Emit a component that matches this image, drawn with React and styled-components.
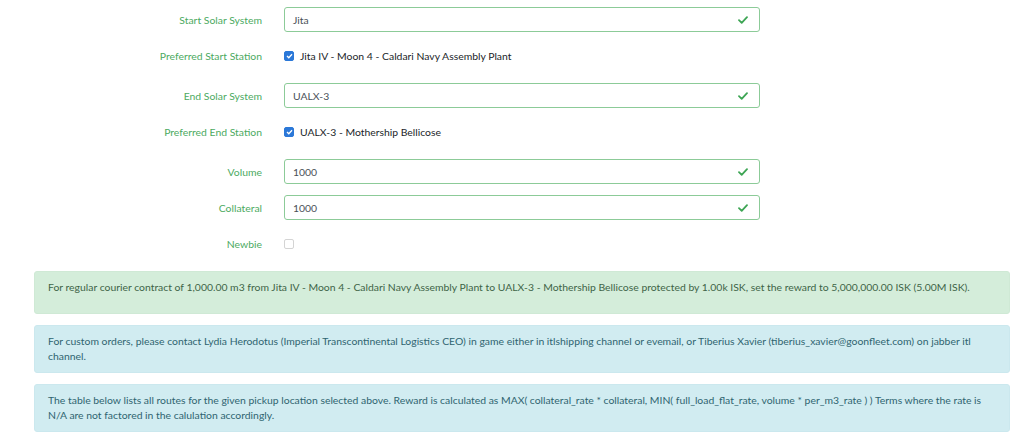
import React from "react";
import styled, { createGlobalStyle } from "styled-components";

const Global = createGlobalStyle`
  html, body { margin: 0; padding: 0; background: #ffffff; }
  body { font-family: Lato, "Liberation Sans", sans-serif; font-size: 10.4px; color: #212529; }
`;

const Page = styled.div`
  padding: 7px 14px 0 34px;
`;

const Form = styled.div`
  display: flex;
  flex-direction: column;
`;

const Row = styled.div`
  display: grid;
  grid-template-columns: 228px 476px;
  column-gap: 22px;
  align-items: center;
  height: 25px;
  margin-bottom: ${(p) => (p.$check ? "15px" : "11px")};
`;

const Label = styled.label`
  text-align: right;
  color: #4caa5f;
  white-space: nowrap;
`;

const InputWrap = styled.div`
  position: relative;
  height: 25px;
  box-sizing: border-box;
  border: 1px solid #8ccb98;
  border-radius: 3px;
  display: flex;
  align-items: center;
  padding: 0 8px;
  color: #495057;
`;

const ValidIcon = styled.svg`
  position: absolute;
  right: 11px;
  top: 8px;
  width: 10px;
  height: 8px;
`;

const CheckLine = styled.div`
  display: flex;
  align-items: center;
  gap: 6px;
  color: #212529;
`;

const Box = styled.span`
  width: 10px;
  height: 10px;
  box-sizing: border-box;
  border-radius: 2px;
  display: inline-flex;
  align-items: center;
  justify-content: center;
  background: ${(p) => (p.$checked ? "#2b78d8" : "#ffffff")};
  border: 1px solid ${(p) => (p.$checked ? "#2b78d8" : "#d4d4d4")};
`;

const Alerts = styled.div`
  display: flex;
  flex-direction: column;
  gap: 11px;
`;

const Alert = styled.div`
  border-radius: 3px;
  padding: 8px 13px ${(p) => (p.$trail ? "18px" : "8px")};
  line-height: 15px;
  background: ${(p) => (p.$variant === "success" ? "#d4edda" : "#d1ecf1")};
  color: ${(p) => (p.$variant === "success" ? "#3e6447" : "#2f6470")};
  border: 1px solid ${(p) => (p.$variant === "success" ? "#cfe9d5" : "#cbe8ee")};
`;

const Valid = () => (
  <ValidIcon viewBox="0 0 10 8">
    <path d="M1 4.2 L3.7 6.8 L9 1.2" fill="none" stroke="#3da554" strokeWidth="1.8" strokeLinecap="round" strokeLinejoin="round" />
  </ValidIcon>
);

const Checkbox = ({ checked }) => (
  <Box $checked={checked}>
    {checked && (
      <svg width="7" height="6" viewBox="0 0 7 6">
        <path d="M1 3 L2.8 4.8 L6 1.2" fill="none" stroke="#fff" strokeWidth="1.3" />
      </svg>
    )}
  </Box>
);

const TextField = ({ label, value }) => (
  <Row>
    <Label>{label}</Label>
    <InputWrap>
      {value}
      <Valid />
    </InputWrap>
  </Row>
);

const CheckField = ({ label, text, checked }) => (
  <Row $check>
    <Label>{label}</Label>
    <CheckLine>
      <Checkbox checked={checked} />
      {text && <span>{text}</span>}
    </CheckLine>
  </Row>
);

export default function App() {
  return (
    <Page>
      <Global />
      <Form>
        <TextField label="Start Solar System" value="Jita" />
        <CheckField label="Preferred Start Station" text="Jita IV - Moon 4 - Caldari Navy Assembly Plant" checked />
        <TextField label="End Solar System" value="UALX-3" />
        <CheckField label="Preferred End Station" text="UALX-3 - Mothership Bellicose" checked />
        <TextField label="Volume" value="1000" />
        <TextField label="Collateral" value="1000" />
        <CheckField label="Newbie" />
      </Form>
      <Alerts>
        <Alert $variant="success" $trail>
          For regular courier contract of 1,000.00 m3 from Jita IV - Moon 4 - Caldari Navy Assembly Plant to UALX-3 - Mothership Bellicose protected by 1.00k ISK, set the reward to 5,000,000.00 ISK (5.00M ISK).
        </Alert>
        <Alert $variant="info">
          For custom orders, please contact Lydia Herodotus (Imperial Transcontinental Logistics CEO) in game either in itlshipping channel or evemail, or Tiberius Xavier (tiberius_xavier@goonfleet.com) on jabber itl channel.
        </Alert>
        <Alert $variant="info">
          The table below lists all routes for the given pickup location selected above. Reward is calculated as MAX( collateral_rate * collateral, MIN( full_load_flat_rate, volume * per_m3_rate ) ) Terms where the rate is N/A are not factored in the calulation accordingly.
        </Alert>
      </Alerts>
    </Page>
  );
}
